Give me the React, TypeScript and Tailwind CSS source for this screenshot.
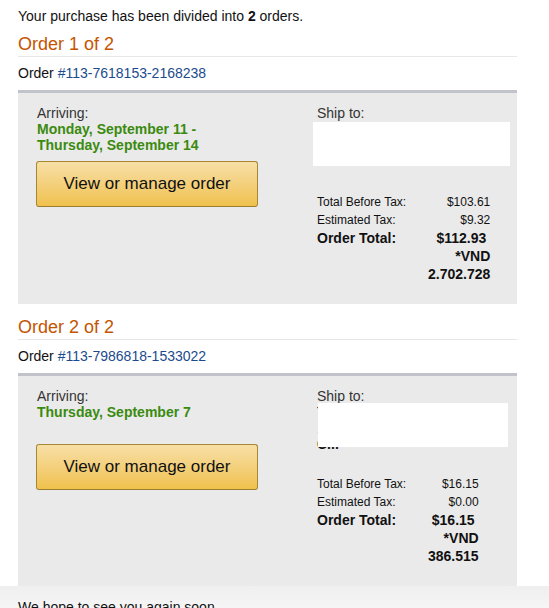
type Order = {
  index: number;
  number: string;
  arriving: string[];
  beforeTax: string;
  tax: string;
  total: string;
  vnd: string;
  peekAddress?: boolean;
};

const orders: Order[] = [
  {
    index: 1,
    number: "#113-7618153-2168238",
    arriving: ["Monday, September 11 -", "Thursday, September 14"],
    beforeTax: "$103.61",
    tax: "$9.32",
    total: "$112.93",
    vnd: "2.702.728",
  },
  {
    index: 2,
    number: "#113-7986818-1533022",
    arriving: ["Thursday, September 7"],
    beforeTax: "$16.15",
    tax: "$0.00",
    total: "$16.15",
    vnd: "386.515",
    peekAddress: true,
  },
];

function ShipTo({ peek }: { peek?: boolean }) {
  if (!peek) {
    return (
      <div className="h-[71px]">
        <div className="mt-[1px] -ml-[4px] h-[44px] w-[197px] bg-white" />
      </div>
    );
  }
  // address text sits under the white cover, a few pixels show through
  return (
    <div className="relative h-[71px] text-[14px] leading-[16px] text-[#111]">
      <div>Tran Minh</div>
      <div>123 Nguyen Hue</div>
      <div className="font-bold">C...</div>
      <div className="absolute left-[1px] top-[-1px] h-[44px] w-[190px] bg-white" />
    </div>
  );
}

function OrderBlock({ order, first }: { order: Order; first: boolean }) {
  return (
    <section>
      <h2
        className={`${first ? "mt-[11px]" : "mt-[14px]"} border-b border-[#e7e7e7] pb-[3px] text-[18px] leading-[18px] font-normal text-[#c45500]`}
      >
        Order {order.index} of 2
      </h2>
      <div className="mt-[8px] text-[14px] leading-[16px]">
        Order <span className="text-[#1b4b8c]">{order.number}</span>
      </div>
      <div className="mt-[9px] flex border-t-[3px] border-[#c0c4ca] bg-[#eaeaea] pt-[12px] pb-[21px] pl-[18px]">
        <div className="w-[281px] shrink-0">
          <div className="h-[48px] pl-[1px] text-[14px] leading-[16px]">
            <div className="text-[#333]">Arriving:</div>
            {order.arriving.map((line) => (
              <div key={line} className="font-bold text-[#3b8a10]">
                {line}
              </div>
            ))}
          </div>
          <button className="mt-[8px] h-[46px] w-[222px] rounded-[3px] border border-[#a88734] border-b-[#9c7e31] bg-linear-to-b from-[#f7dfa5] to-[#f0c14b] text-[17px] text-[#111]">
            View or manage order
          </button>
        </div>
        <div className="flex-1">
          <div className="text-[14px] leading-[16px] text-[#333]">Ship to:</div>
          <ShipTo peek={order.peekAddress} />
          <div className="grid w-fit grid-cols-[111px_auto] leading-[18px] text-[#111]">
            <div className="text-[12px]">Total Before Tax:</div>
            <div className="text-right text-[12px]">{order.beforeTax}</div>
            <div className="text-[12px]">Estimated Tax:</div>
            <div className="text-right text-[12px]">{order.tax}</div>
            <div className="text-[14px] font-bold">Order Total:</div>
            <div className="text-right text-[14px] font-bold">
              <div className="pr-[4px]">{order.total}</div>
              <div>*VND</div>
              <div>{order.vnd}</div>
            </div>
          </div>
        </div>
      </div>
    </section>
  );
}

export default function App() {
  return (
    <div className="min-h-[608px] bg-white font-['Liberation_Sans',Arial,sans-serif] text-[#111]">
      <div className="w-[517px] pl-[18px]">
        <p className="pt-[8px] text-[14px] leading-[16px]">
          Your purchase has been divided into <b>2</b> orders.
        </p>
        {orders.map((o, i) => (
          <OrderBlock key={o.number} order={o} first={i === 0} />
        ))}
      </div>
      <div className="h-[40px] bg-linear-to-b from-[#efefef] to-[#fbfbfb] pt-[13px] pl-[18px] text-[14px] leading-[16px]">
        We hope to see you again soon.
      </div>
    </div>
  );
}
